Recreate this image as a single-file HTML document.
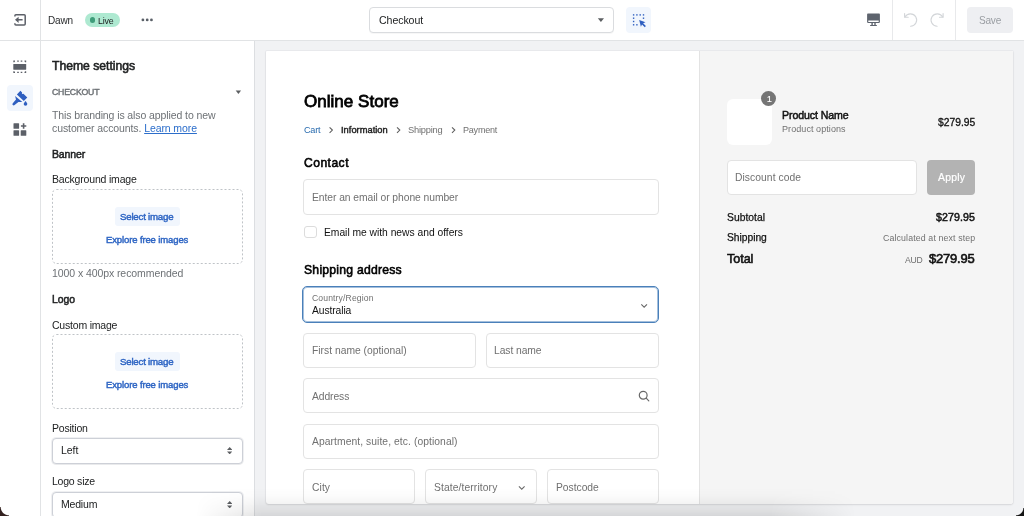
<!DOCTYPE html>
<html lang="en">
<head>
<meta charset="utf-8">
<title>Dawn - Theme editor</title>
<style>
*{box-sizing:border-box;margin:0;padding:0}
html,body{width:1024px;height:516px;overflow:hidden;background:#fff}
body{font-family:"Liberation Sans",sans-serif;font-size:10.5px;color:#202223;position:relative}
.abs{position:absolute}
.t{position:absolute;white-space:nowrap;line-height:14px;height:14px;will-change:transform}
#topline{position:absolute;left:0;top:40px;width:1024px;height:1px;background:#e1e3e5}
#railline{position:absolute;left:40px;top:0;width:1px;height:516px;background:#e1e3e5}
#stage{position:absolute;left:254px;top:41px;width:770px;height:475px;background:#f1f2f4;border-left:1px solid #dcdee1}
#frame{position:absolute;left:266px;top:51px;width:747px;height:453px;background:#fff;border-radius:1px 1px 3px 3px;box-shadow:0 0 0 1px rgba(63,63,68,.04),0 1px 2px rgba(63,63,68,.12)}
#summary{position:absolute;left:699px;top:51px;width:314px;height:453px;background:#f5f5f5;border-left:1px solid #e3e3e3;border-radius:0 1px 3px 0}
.field{position:absolute;border:1px solid #e3e3e3;border-radius:4px;background:#fff}
.drop{position:absolute;border:1px dashed #bcc0c4;border-radius:4px}
.selbtn{position:absolute;background:#f1f6fd;border-radius:3px}
.psel{position:absolute;border:1px solid #cdd0d7;border-radius:4px;background:#fff;box-shadow:0 0 0 1px rgba(205,208,215,.32),0 1px 0 rgba(0,0,0,.03)}
</style>
</head>
<body>
<div id="railline"></div>
<div id="topline"></div>
<!-- top bar -->
<svg class="abs" style="left:0;top:0" width="40" height="40" viewBox="0 0 40 40"><path d="M14.900 16.500V15.700a1 1 0 0 1 1-1H24.200a1 1 0 0 1 1 1V24a1 1 0 0 1-1 1H15.900a1 1 0 0 1-1-1V23.200" fill="none" stroke="#5c6068" stroke-width="1.500"/><path d="M15 19.850L18.600 16.800V19.100H22.600V20.600H18.600V22.900Z" fill="#5c6068"/></svg>
<div class="abs" style="left:85px;top:13px;width:35px;height:14px;border-radius:7px;background:#aee9d1"></div>
<div class="abs" style="left:89.700px;top:17.200px;width:5.600px;height:5.600px;border-radius:3px;background:#3f9d7a"></div>
<svg class="abs" style="left:140px;top:17px" width="14" height="6" viewBox="140 17 14 6"><g fill="#5a6068"><circle cx="142.900" cy="19.900" r="1.400"/><circle cx="147.200" cy="19.900" r="1.400"/><circle cx="151.450" cy="19.900" r="1.400"/></g></svg>
<div class="abs" style="left:369px;top:7px;width:245px;height:25.500px;border:1px solid #dadcdf;border-radius:4px;background:#fff;box-shadow:0 1px 0 rgba(0,0,0,.03)"></div>
<svg class="abs" style="left:596px;top:17px" width="10" height="7" viewBox="596 17 10 7"><path d="M597.800 18.300h6.200l-3.100 3.700z" fill="#5c5f62"/></svg>
<div class="abs" style="left:626px;top:7px;width:25px;height:25.500px;border-radius:4px;background:#f1f6fd"></div>
<svg class="abs" style="left:628px;top:10px" width="22" height="20" viewBox="628 10 22 20"><g fill="#2f5fc0"><rect x="632.9" y="14.2" width="1.400" height="1.400"/><rect x="636.2" y="14.2" width="1.400" height="1.400"/><rect x="639.5" y="14.2" width="1.400" height="1.400"/><rect x="642.8" y="14.2" width="1.400" height="1.400"/><rect x="632.9" y="17.5" width="1.400" height="1.400"/><rect x="632.9" y="20.8" width="1.400" height="1.400"/><rect x="632.9" y="24.1" width="1.400" height="1.400"/><rect x="642.8" y="17.5" width="1.400" height="1.400"/><rect x="636.2" y="24.1" width="1.400" height="1.400"/><path d="M639.200 19.900l6.300 2.300-2.400 1.100 2.800 2.800-1.100 1.100-2.800-2.800-1.100 2.400z"/></g></svg>
<svg class="abs" style="left:860px;top:0" width="100" height="40" viewBox="860 0 100 40">
<g fill="#5e646e"><path d="M867.900 13.600h11.200a0.800 0.800 0 0 1 0.800 0.800v7.700a0.800 0.800 0 0 1-0.800 0.800h-11.200a0.800 0.800 0 0 1-0.800-0.800v-7.700a0.800 0.800 0 0 1 0.800-0.800zM868.300 20.600v1.400h10.400v-1.400z" fill-rule="evenodd"/><rect x="871.400" y="22.900" width="1.400" height="2.100"/><rect x="874.300" y="22.900" width="1.400" height="2.100"/><rect x="870.100" y="24.900" width="6.800" height="1.150" rx="0.300"/></g>
<g fill="none" stroke="#d3d6d9" stroke-width="1.150" stroke-linecap="round" stroke-linejoin="round"><path d="M904.600 13.600v3.600h3.600"/><path d="M905 17a6.200 6.200 0 1 1 5.600 9.200"/><path d="M943.100 13.600v3.600h-3.600"/><path d="M942.700 17a6.200 6.200 0 1 0-5.600 9.200"/></g>
<rect x="892" y="0" width="1" height="40" fill="#e8e9eb"/><rect x="955" y="0" width="1" height="40" fill="#e8e9eb"/>
</svg>
<div class="abs" style="left:967px;top:7px;width:45.500px;height:25.500px;border-radius:4px;background:#eeeff2"></div>
<!-- rail icons -->
<div class="abs" style="left:7px;top:85.400px;width:25.700px;height:25.400px;border-radius:4px;background:#f1f6fd"></div>
<svg class="abs" style="left:0;top:40px" width="40" height="110" viewBox="0 40 40 110">
<g fill="#5c6068">
<rect x="13.300" y="64.100" width="12.900" height="5.600" rx="0.400"/>
<path d="M13.300 60.500h1.700v1.200h-0.500v0.600h-1.200zM17.200 60.500h1.600v1.200h-1.600zM20.700 60.500h1.600v1.200h-1.600zM24.500 60.500h1.700v1.800h-1.200v-0.600h-0.500z"/>
<path d="M13.300 73h1.700v-1.200h-0.500v-0.600h-1.200zM17.200 73h1.600v-1.200h-1.600zM20.700 73h1.600v-1.200h-1.600zM24.500 73h1.700v-1.800h-1.200v0.600h-0.500z"/>
<rect x="13.500" y="123.200" width="5.600" height="5.600" rx="0.600"/>
<rect x="13.500" y="130.200" width="5.600" height="5.600" rx="0.600"/>
<rect x="20.700" y="130.200" width="5.600" height="5.600" rx="0.600"/>
<path d="M22.800 123.300h1.600v1.900h1.900v1.600h-1.900v1.900h-1.600v-1.900h-1.900v-1.600h1.900z"/>
</g>
<g fill="#2f5fc0">
<path d="M20.400 90.700l1.700 1.700-0.200 1.500 1.500-0.200 3.900 3.800-3.500 3.400-6.900-6.500z"/>
<path d="M15.100 95.900l7.200 6.200-3.900-0.100-3.800 3.100a1.250 1.250 0 0 1-1.800-1.800l3.200-3.700z"/>
<path d="M25.500 100.900c1.300 1.600 1.800 2.400 1.800 3.100a1.800 1.800 0 0 1-3.600 0c0-0.700 0.500-1.500 1.800-3.100z"/>
</g>
</svg>
<!-- sidebar boxes -->
<svg class="abs" style="left:235px;top:90px" width="7" height="5" viewBox="235 90 7 5"><path d="M235.700 90.500h5.400l-2.700 3.400z" fill="#5c5f62"/></svg>
<svg class="abs" style="left:51px;top:188px" width="193" height="77" viewBox="0 0 193 77"><rect x="1.500" y="1.500" width="190" height="74" rx="4" fill="none" stroke="#bfc3c7" stroke-width="1" stroke-dasharray="2 2"/></svg>
<div class="selbtn" style="left:115px;top:206.700px;width:65px;height:19.300px"></div>
<svg class="abs" style="left:51px;top:333px" width="193" height="77" viewBox="0 0 193 77"><rect x="1.500" y="1.500" width="190" height="74" rx="4" fill="none" stroke="#bfc3c7" stroke-width="1" stroke-dasharray="2 2"/></svg>
<div class="selbtn" style="left:115px;top:351.900px;width:65px;height:19.300px"></div>
<div class="psel" style="left:52px;top:438px;width:190.500px;height:25.500px"></div>
<svg class="abs" style="left:227px;top:447px" width="5.400" height="7.400" viewBox="0 0 5.400 7.400"><path d="M2.700 0l2.700 3h-5.400zM2.700 7.400l2.700-3h-5.400z" fill="#5c5f62"/></svg>
<div class="psel" style="left:52px;top:492px;width:190.500px;height:25.500px"></div>
<svg class="abs" style="left:227px;top:501px" width="5.400" height="7.400" viewBox="0 0 5.400 7.400"><path d="M2.700 0l2.700 3h-5.400zM2.700 7.400l2.700-3h-5.400z" fill="#5c5f62"/></svg>
<!-- stage + preview frame -->
<div id="stage"></div>
<div id="frame"></div>
<div id="summary"></div>
<svg class="abs" style="left:325px;top:125px" width="135" height="10" viewBox="325 125 135 10" fill="none" stroke="#606060" stroke-width="1.100"><path d="M329.600 127.300l2.800 2.800-2.800 2.800M397 127.300l2.800 2.800-2.800 2.800M452 127.300l2.800 2.800-2.800 2.800"/></svg>
<div class="field" style="left:303px;top:179px;width:356px;height:35.500px"></div>
<div class="abs" style="left:304px;top:225.700px;width:12.600px;height:12.500px;border:1px solid #dcdcdc;border-radius:3px;background:#fff"></div>
<div class="field" style="left:302px;top:286px;width:357px;height:37px;border:1px solid #4a80ba;box-shadow:inset 0 0 0 1px rgba(74,128,186,.5);border-radius:5px"></div>
<svg class="abs" style="left:640px;top:302px" width="9" height="8" viewBox="640 302 9 8" fill="none" stroke="#666" stroke-width="1.050"><path d="M641.300 304.300l2.850 2.850 2.850-2.850"/></svg>
<div class="field" style="left:303px;top:332.600px;width:172.700px;height:35.200px"></div>
<div class="field" style="left:486px;top:332.600px;width:172.700px;height:35.200px"></div>
<div class="field" style="left:303px;top:378.400px;width:356px;height:35px"></div>
<svg class="abs" style="left:638px;top:390px" width="12" height="12" viewBox="0 0 12 12" fill="none" stroke="#686868" stroke-width="1.200" stroke-linecap="round"><circle cx="5.200" cy="5.200" r="3.900"/><path d="M8.200 8.200l2.600 2.600"/></svg>
<div class="field" style="left:303px;top:424px;width:356px;height:35.200px"></div>
<div class="field" style="left:303px;top:469.200px;width:112px;height:35.200px"></div>
<div class="field" style="left:425px;top:469.200px;width:112px;height:35.200px"></div>
<svg class="abs" style="left:517px;top:484px" width="9" height="8" viewBox="517 484 9 8" fill="none" stroke="#6a6a6a" stroke-width="1.050"><path d="M518.900 486.300l2.850 2.850 2.850-2.850"/></svg>
<div class="field" style="left:547px;top:469.200px;width:112px;height:35.200px"></div>
<!-- summary boxes -->
<div class="abs" style="left:727px;top:98.600px;width:45.400px;height:46px;border-radius:6px;background:#fff"></div>
<div class="abs" style="left:761px;top:91.300px;width:15px;height:15px;border-radius:8px;background:#757575"></div>
<div class="field" style="left:727px;top:159.600px;width:190px;height:35.200px"></div>
<div class="abs" style="left:927px;top:159.600px;width:48.200px;height:35.200px;border-radius:4px;background:#b3b3b3"></div>
<div class="t" style="left:48.4px;top:14.00px;font-size:10.03px;font-weight:400;color:#2b2d2f;letter-spacing:-0.203px;">Dawn</div>
<div class="t" style="left:98.4px;top:14.00px;font-size:8.86px;font-weight:400;color:#202223;letter-spacing:-0.211px;">Live</div>
<div class="t" style="left:378.8px;top:13.00px;font-size:10.6px;font-weight:400;color:#202223;letter-spacing:-0.081px;">Checkout</div>
<div class="t" style="left:978.8px;top:14.00px;font-size:10.08px;font-weight:400;color:#9a9ea3;letter-spacing:-0.228px;">Save</div>
<div class="t" style="left:52.2px;top:59.00px;font-size:12.2px;font-weight:400;color:#202223;letter-spacing:-0.010px;-webkit-text-stroke:0.56px #202223;">Theme settings</div>
<div class="t" style="left:52.2px;top:85.00px;font-size:8.7px;font-weight:400;color:#6d7175;letter-spacing:-0.179px;-webkit-text-stroke:0.40px #6d7175;">CHECKOUT</div>
<div class="t" style="left:52.2px;top:108.00px;font-size:10.5px;font-weight:400;color:#6d7175;letter-spacing:-0.098px;">This branding is also applied to new</div>
<div class="t" style="left:52.2px;top:121.00px;font-size:10.5px;font-weight:400;color:#6d7175;letter-spacing:-0.095px;">customer accounts. <span style="color:#2c6ecb;text-decoration:underline;text-underline-offset:1px">Learn more</span></div>
<div class="t" style="left:52.2px;top:147.00px;font-size:10.5px;font-weight:400;color:#202223;letter-spacing:-0.132px;-webkit-text-stroke:0.48px #202223;">Banner</div>
<div class="t" style="left:52.2px;top:172.00px;font-size:10.5px;font-weight:400;color:#202223;letter-spacing:-0.184px;">Background image</div>
<div class="t" style="left:120.4px;top:210.00px;font-size:9.7px;font-weight:400;color:#2f66c4;letter-spacing:-0.220px;-webkit-text-stroke:0.45px #2f66c4;">Select image</div>
<div class="t" style="left:106.0px;top:233.00px;font-size:9.5px;font-weight:400;color:#2f66c4;letter-spacing:-0.121px;-webkit-text-stroke:0.44px #2f66c4;">Explore free images</div>
<div class="t" style="left:52.2px;top:266.00px;font-size:10.5px;font-weight:400;color:#6d7175;letter-spacing:-0.078px;">1000 x 400px recommended</div>
<div class="t" style="left:52.2px;top:293.00px;font-size:10.4px;font-weight:400;color:#202223;letter-spacing:-0.042px;-webkit-text-stroke:0.48px #202223;">Logo</div>
<div class="t" style="left:52.2px;top:318.00px;font-size:10.5px;font-weight:400;color:#202223;letter-spacing:-0.209px;">Custom image</div>
<div class="t" style="left:120.4px;top:355.00px;font-size:9.7px;font-weight:400;color:#2f66c4;letter-spacing:-0.220px;-webkit-text-stroke:0.45px #2f66c4;">Select image</div>
<div class="t" style="left:106.0px;top:378.00px;font-size:9.5px;font-weight:400;color:#2f66c4;letter-spacing:-0.121px;-webkit-text-stroke:0.44px #2f66c4;">Explore free images</div>
<div class="t" style="left:52.2px;top:421.00px;font-size:10.5px;font-weight:400;color:#202223;letter-spacing:-0.208px;">Position</div>
<div class="t" style="left:60.6px;top:443.00px;font-size:10.5px;font-weight:400;color:#202223;letter-spacing:-0.039px;">Left</div>
<div class="t" style="left:52.2px;top:474.00px;font-size:10.5px;font-weight:400;color:#202223;letter-spacing:-0.232px;">Logo size</div>
<div class="t" style="left:60.6px;top:497.00px;font-size:10.5px;font-weight:400;color:#202223;letter-spacing:-0.192px;">Medium</div>
<div class="t" style="left:303.5px;top:95.00px;font-size:17.0px;font-weight:400;color:#000;letter-spacing:0.027px;-webkit-text-stroke:0.78px #000;">Online Store</div>
<div class="t" style="left:303.5px;top:123.00px;font-size:9.13px;font-weight:400;color:#2a6caf;letter-spacing:-0.217px;">Cart</div>
<div class="t" style="left:340.8px;top:123.00px;font-size:9.3px;font-weight:400;color:#222;letter-spacing:0.018px;-webkit-text-stroke:0.43px #222;">Information</div>
<div class="t" style="left:408.1px;top:123.00px;font-size:9.3px;font-weight:400;color:#707070;letter-spacing:-0.227px;">Shipping</div>
<div class="t" style="left:463.0px;top:123.00px;font-size:9.03px;font-weight:400;color:#707070;letter-spacing:-0.216px;">Payment</div>
<div class="t" style="left:303.5px;top:156.00px;font-size:12.1px;font-weight:400;color:#000;letter-spacing:0.469px;-webkit-text-stroke:0.56px #000;">Contact</div>
<div class="t" style="left:311.8px;top:191.00px;font-size:10.3px;font-weight:400;color:#707070;letter-spacing:-0.051px;">Enter an email or phone number</div>
<div class="t" style="left:324.1px;top:226.00px;font-size:10.3px;font-weight:400;color:#111;letter-spacing:-0.020px;">Email me with news and offers</div>
<div class="t" style="left:303.5px;top:263.00px;font-size:12.2px;font-weight:400;color:#000;letter-spacing:0.234px;-webkit-text-stroke:0.56px #000;">Shipping address</div>
<div class="t" style="left:311.8px;top:291.00px;font-size:8.6px;font-weight:400;color:#707070;letter-spacing:0.137px;">Country/Region</div>
<div class="t" style="left:311.8px;top:304.00px;font-size:10.3px;font-weight:400;color:#111;letter-spacing:-0.095px;">Australia</div>
<div class="t" style="left:311.8px;top:344.00px;font-size:10.3px;font-weight:400;color:#707070;letter-spacing:0.009px;">First name (optional)</div>
<div class="t" style="left:494.3px;top:344.00px;font-size:10.3px;font-weight:400;color:#707070;letter-spacing:-0.062px;">Last name</div>
<div class="t" style="left:311.8px;top:390.00px;font-size:10.3px;font-weight:400;color:#707070;letter-spacing:-0.080px;">Address</div>
<div class="t" style="left:311.8px;top:435.00px;font-size:10.3px;font-weight:400;color:#707070;letter-spacing:0.075px;">Apartment, suite, etc. (optional)</div>
<div class="t" style="left:311.8px;top:481.00px;font-size:10.3px;font-weight:400;color:#707070;letter-spacing:0.089px;">City</div>
<div class="t" style="left:433.8px;top:481.00px;font-size:10.3px;font-weight:400;color:#707070;letter-spacing:0.106px;">State/territory</div>
<div class="t" style="left:555.8px;top:481.00px;font-size:10.3px;font-weight:400;color:#707070;letter-spacing:-0.020px;">Postcode</div>
<div class="t" style="left:766.5px;top:92.00px;font-size:8.6px;font-weight:400;color:#fff;letter-spacing:0.000px;-webkit-text-stroke:.2px #fff">1</div>
<div class="t" style="left:782.4px;top:108.00px;font-size:10.6px;font-weight:400;color:#111;letter-spacing:-0.093px;-webkit-text-stroke:0.49px #111;">Product Name</div>
<div class="t" style="left:782.4px;top:122.00px;font-size:9.0px;font-weight:400;color:#707070;letter-spacing:0.075px;">Product options</div>
<div class="t" style="left:937.8px;top:116.00px;font-size:10.3px;font-weight:400;color:#111;letter-spacing:-0.006px;-webkit-text-stroke:.3px #111">$279.95</div>
<div class="t" style="left:735.3px;top:171.00px;font-size:10.3px;font-weight:400;color:#707070;letter-spacing:0.061px;">Discount code</div>
<div class="t" style="left:937.6px;top:171.00px;font-size:10.4px;font-weight:400;color:#fff;letter-spacing:0.225px;-webkit-text-stroke:.2px #fff">Apply</div>
<div class="t" style="left:727.0px;top:211.00px;font-size:10.3px;font-weight:400;color:#111;letter-spacing:0.029px;-webkit-text-stroke:.25px #111">Subtotal</div>
<div class="t" style="left:936.3px;top:210.00px;font-size:10.6px;font-weight:400;color:#111;letter-spacing:0.084px;-webkit-text-stroke:0.49px #111;">$279.95</div>
<div class="t" style="left:727.0px;top:231.00px;font-size:10.3px;font-weight:400;color:#111;letter-spacing:-0.040px;-webkit-text-stroke:.25px #111">Shipping</div>
<div class="t" style="left:882.9px;top:231.00px;font-size:8.8px;font-weight:400;color:#707070;letter-spacing:0.123px;">Calculated at next step</div>
<div class="t" style="left:727.0px;top:252.00px;font-size:12.6px;font-weight:400;color:#111;letter-spacing:-0.052px;-webkit-text-stroke:0.58px #111;">Total</div>
<div class="t" style="left:904.6px;top:253.00px;font-size:8.6px;font-weight:400;color:#707070;letter-spacing:-0.178px;">AUD</div>
<div class="t" style="left:929.3px;top:252.00px;font-size:13.0px;font-weight:400;color:#111;letter-spacing:-0.200px;-webkit-text-stroke:0.60px #111;">$279.95</div>
<!-- window chrome: bottom shadow -->
<div class="abs" style="left:196px;top:488px;width:660px;height:28px;background:linear-gradient(to bottom,rgba(0,0,0,0),rgba(0,0,0,.012) 25%,rgba(0,0,0,.028) 43%,rgba(0,0,0,.05) 61%,rgba(0,0,0,.075) 79%,rgba(0,0,0,.115));-webkit-mask-image:linear-gradient(to right,transparent,#000 10%,#000 87%,transparent);mask-image:linear-gradient(to right,transparent,#000 10%,#000 87%,transparent)"></div>
<div class="abs" style="left:0;top:507px;width:9px;height:9px;background:radial-gradient(circle at 100% 0,rgba(50,32,32,0) 7.800px,#33211f 8.800px)"></div>
<div class="abs" style="left:1016px;top:508px;width:8px;height:8px;background:radial-gradient(circle at 0 0,rgba(20,20,20,0) 6.800px,#141414 7.800px)"></div>
</body>
</html>
